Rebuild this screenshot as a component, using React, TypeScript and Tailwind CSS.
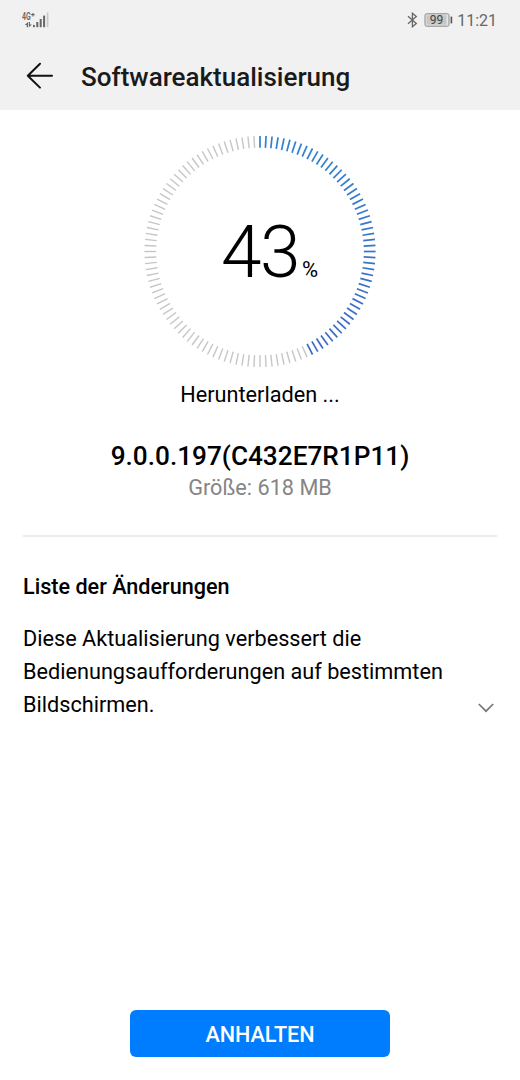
const TICKS = 120;

const StatusBar = () => {
  return (
    <div className="flex h-10 items-center justify-between pl-[22px] pr-[23px] text-[#666]">
      {/* Mobile network */}
      <svg width="27" height="18" viewBox="0 0 27 18" fill="currentColor">
        <text
          x="0"
          y="8.6"
          fontSize="10"
          fontWeight="600"
          textLength="8.8"
          lengthAdjust="spacingAndGlyphs"
        >
          4G
        </text>
        <path d="M9.2 3.1h3.4v1.1H9.2zM10.4 1.9h1.1v3.5h-1.1z" />
        <path d="M6 11v5.2H4.7V14H2.8zM6.8 16.2V11H8v2.4h2z" />
        <rect x="11" y="13.9" width="1.8" height="2.3" />
        <rect x="14.3" y="11" width="2" height="5.2" />
        <rect x="17.7" y="8" width="2" height="8.2" />
        <rect x="21.1" y="4.6" width="2" height="11.6" />
        <rect x="24.8" y="1.6" width="1.6" height="14.6" fill="#c8c8c8" />
      </svg>

      <div className="flex items-center pt-px">
        {/* Bluetooth */}
        <svg
          className="mb-0.5"
          width="11"
          height="16"
          viewBox="0 0 11 16"
          fill="none"
          stroke="currentColor"
          strokeWidth="1.3"
        >
          <path d="M1 4.3 9.3 11.6 5.4 14.8V1.2l3.9 3.2L1 11.7" />
        </svg>
        {/* Battery */}
        <svg
          className="mr-1 mb-px ml-1.5"
          width="29"
          height="14"
          viewBox="0 0 29 14"
        >
          <rect
            x="1"
            y="0.8"
            width="24"
            height="12.4"
            rx="1.6"
            fill="#e4e4e4"
            stroke="#8a8a8a"
          />
          <rect x="2.5" y="2.3" width="20" height="9.4" fill="#c6c6c6" />
          <rect x="26.6" y="3.6" width="1.6" height="6.8" fill="#555" />
          <text x="5.8" y="11.2" fontSize="12" fill="#444">
            99
          </text>
        </svg>
        <span className="text-base">11:21</span>
      </div>
    </div>
  );
};

const ProgressRing = ({ percent }: { percent: number }) => {
  const filled = Math.round((percent / 100) * TICKS);

  return (
    <div className="relative h-[232px] w-[232px]">
      <svg width="232" height="232" viewBox="0 0 232 232">
        <defs>
          <linearGradient
            id="ring"
            gradientUnits="userSpaceOnUse"
            x1="0"
            y1="0"
            x2="0"
            y2="232"
          >
            <stop offset="0" stopColor="#2f82cf" />
            <stop offset="1" stopColor="#4068c4" />
          </linearGradient>
        </defs>
        {Array.from({ length: TICKS }, (_, i) => {
          const a = (i / TICKS) * Math.PI * 2;
          const x = Math.sin(a);
          const y = -Math.cos(a);
          return (
            <line
              key={i}
              x1={116 + x * 103.8}
              y1={115.5 + y * 103.8}
              x2={116 + x * 115.6}
              y2={115.5 + y * 115.6}
              stroke={i < filled ? "url(#ring)" : "#c6c6c6"}
              strokeWidth={i < filled ? 1.7 : 1.4}
            />
          );
        })}
      </svg>
      <div className="absolute inset-0 flex items-baseline justify-center pt-[74px] pl-[19px]">
        <span className="text-[73px] leading-[84px] font-light tracking-[-1.5px]">
          {percent}
        </span>
        <span className="ml-[3px] text-[22px]">%</span>
      </div>
    </div>
  );
};

const App = () => {
  return (
    <div className="flex h-[1080px] w-[520px] flex-col bg-white font-[Roboto,sans-serif] text-black">
      <header className="h-[110px] bg-[#f1f1f1]">
        <StatusBar />
        <div className="flex h-[72px] items-center pl-[26px]">
          <svg
            width="28"
            height="28"
            viewBox="0 0 28 28"
            fill="none"
            stroke="#111"
            strokeWidth="2"
            strokeLinecap="round"
            strokeLinejoin="round"
          >
            <path d="M14 1.8 1.8 13.7 14 25.6M1.8 13.7H26" />
          </svg>
          <h1 className="ml-[27px] pt-0.5 text-[26px] font-medium text-[#1a1a1a]">
            Softwareaktualisierung
          </h1>
        </div>
      </header>

      <main className="flex flex-1 flex-col px-[23px] pt-[26px]">
        <section className="flex flex-col items-center">
          <ProgressRing percent={43} />
          <p className="mt-[13px] text-[21.7px] leading-7">Herunterladen ...</p>
          <h2 className="mt-[31px] text-[26.2px] leading-8 font-medium">
            9.0.0.197(C432E7R1P11)
          </h2>
          <p className="mt-0.5 text-[21.7px] leading-7 text-[#858585]">
            Größe: 618 MB
          </p>
        </section>

        <hr className="mt-[33px] border-t-2 border-[#ececec]" />

        <section className="mt-9">
          <h3 className="text-[21.6px] leading-7 font-medium">
            Liste der Änderungen
          </h3>
          <div className="mt-[22px] flex items-end justify-between">
            <p className="w-[430px] text-[21.68px] leading-[32.8px]">
              Diese Aktualisierung verbessert die Bedienungsaufforderungen auf
              bestimmten Bildschirmen.
            </p>
            <svg
              className="mr-[3px] mb-2"
              width="16"
              height="10"
              viewBox="0 0 16 10"
              fill="none"
              stroke="#777"
              strokeWidth="1.7"
            >
              <path d="M0.8 1 8 8.2 15.2 1" />
            </svg>
          </div>
        </section>

        <button className="mx-auto mt-auto mb-[23px] h-[47px] w-[260px] rounded-[6px] bg-[#007dff] pt-[3px] text-[21.6px] font-medium text-white">
          ANHALTEN
        </button>
      </main>
    </div>
  );
};

export default App;
